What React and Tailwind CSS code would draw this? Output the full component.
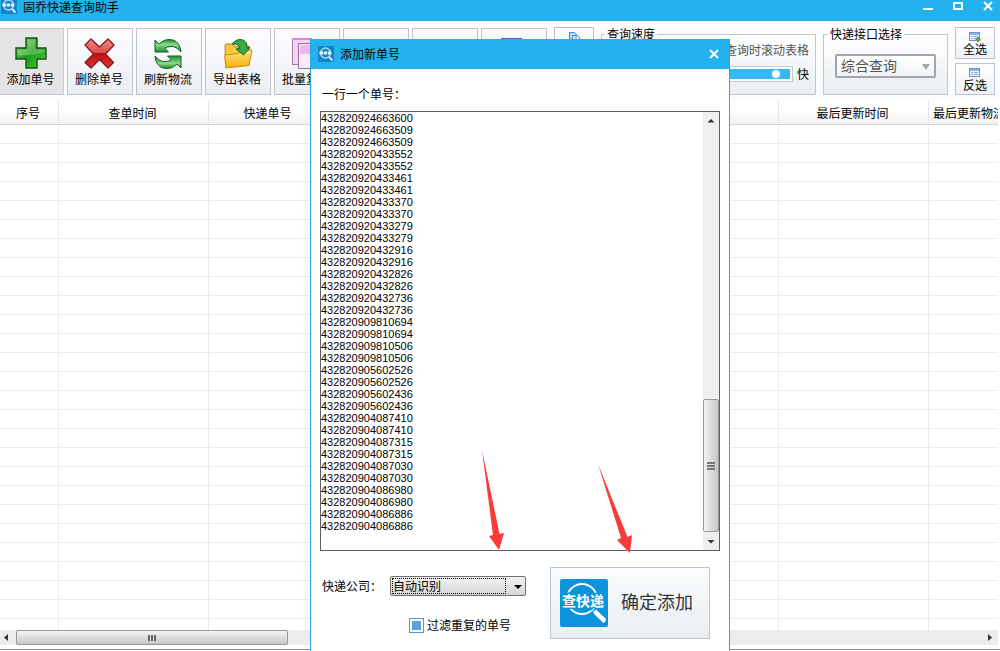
import React from 'react';

const numbers = [
    '432820924663600', '432820924663509', '432820924663509', '432820920433552', '432820920433552',
    '432820920433461', '432820920433461', '432820920433370', '432820920433370', '432820920433279',
    '432820920433279', '432820920432916', '432820920432916', '432820920432826', '432820920432826',
    '432820920432736', '432820920432736', '432820909810694', '432820909810694', '432820909810506',
    '432820909810506', '432820905602526', '432820905602526', '432820905602436', '432820905602436',
    '432820904087410', '432820904087410', '432820904087315', '432820904087315', '432820904087030',
    '432820904087030', '432820904086980', '432820904086980', '432820904086886', '432820904086886',
];

const Logo = ({ className }) => (
    <svg viewBox="0 0 48 48" className={className} aria-hidden="true">
        <rect width="48" height="48" rx="2" fill="#0b93dc" />
        <circle cx="22" cy="20" r="15" fill="none" stroke="#fff" strokeWidth="2" />
        <path d="M33 33l3-2.500 9.500 9q1 3-2 4.500l-9-8.500z" fill="#fff" />
        <text x="23" y="27" textAnchor="middle" fontSize="14" fontWeight="700" fill="#fff" stroke="#0b93dc" strokeWidth="3" paintOrder="stroke">查快递</text>
    </svg>
);

// Reduced mark for the 16px title bar slots
const SmallLogo = () => (
    <svg viewBox="0 0 16 16" className="size-4 shrink-0" aria-hidden="true">
        <rect width="16" height="16" fill="#1285c8" />
        <circle cx="7.500" cy="7" r="5" fill="none" stroke="#a8dcf6" strokeWidth="1.400" />
        <path d="M1.500 7h12" stroke="#e4f5fd" strokeWidth="3" strokeDasharray="3.400 .8" />
        <path d="M11 11l3.500 3.500" stroke="#d5effb" strokeWidth="2" />
    </svg>
);

const AddIcon = () => (
    <svg viewBox="0 0 32 32" className="size-8">
        <defs>
            <linearGradient id="add" x1="0" y1="0" x2="1" y2="1">
                <stop offset="0" stopColor="#7fd866" />
                <stop offset=".5" stopColor="#1f9a1c" />
                <stop offset="1" stopColor="#44d32c" />
            </linearGradient>
        </defs>
        <path d="M11 1h11v10h9v11h-9v9H11v-9H1V11h10z" fill="url(#add)" stroke="#14551a" strokeWidth="1.400" />
        <path d="M12.500 2.500h8v10h9v2q-7 4-27 4v-6h10z" fill="#fff" opacity=".25" />
    </svg>
);

const DeleteIcon = () => (
    <svg viewBox="0 0 32 32" className="size-8">
        <defs>
            <linearGradient id="del" x1="0" y1="0" x2="0" y2="1">
                <stop offset="0" stopColor="#f58c88" />
                <stop offset=".48" stopColor="#dc4a48" />
                <stop offset=".5" stopColor="#b81014" />
                <stop offset="1" stopColor="#e03434" />
            </linearGradient>
        </defs>
        <path d="M8 2l8.500 8L25 2l6 6-8.500 9 8 8.500-5.500 5.500-8.500-8.500L8 31l-6-5.500L10.500 17 2 8z" fill="url(#del)" stroke="#7c181c" strokeWidth="1.200" strokeLinejoin="round" />
    </svg>
);

const RefreshIcon = () => (
    <svg viewBox="0 0 32 32" className="size-8">
        <defs>
            <linearGradient id="ref" x1="0" y1="0" x2="0" y2="1">
                <stop offset="0" stopColor="#1f8a2c" />
                <stop offset=".4" stopColor="#8ad98a" />
                <stop offset="1" stopColor="#1f8f2a" />
            </linearGradient>
        </defs>
        <path d="M3 3l4 4q6-6 14-4 7 2 8 12-5-6-10-5.500-4 0-6 2l3.500 3.500H3z" fill="url(#ref)" stroke="#15602a" />
        <path d="M3 3l4 4q6-6 14-4 7 2 8 12-5-6-10-5.500-4 0-6 2l3.500 3.500H3z" transform="rotate(180 16 17)" fill="url(#ref)" stroke="#15602a" />
    </svg>
);

const ExportIcon = () => (
    <svg viewBox="0 0 32 32" className="size-8">
        <defs>
            <linearGradient id="fold" x1="0" y1="0" x2="0" y2="1">
                <stop offset="0" stopColor="#ffe480" />
                <stop offset="1" stopColor="#f5b010" />
            </linearGradient>
        </defs>
        <path d="M4 9l1-2h7l2 3 14-1v14L5 30z" fill="#f7c93c" stroke="#b97c14" />
        <path d="M3.500 18l14-1.500 3-2.500 10.500-1-3 15.500L5 31z" fill="url(#fold)" stroke="#c98a12" />
        <path d="M11 7q5-6 11-4 4.500 2 4 8l3-.5L22.500 18 15 12l3.500-.5q0-5-7.500-4.500z" fill="#3aac3d" stroke="#17602a" />
    </svg>
);

const CopyIcon = () => (
    <svg viewBox="0 0 32 32" className="size-8">
        <rect x="2.500" y="1.500" width="19" height="26" fill="#f1d5f2" stroke="#a978ad" />
        <path d="M2 2h20" stroke="#da84dc" strokeWidth="2" />
        <rect x="8.500" y="6.500" width="21" height="25" fill="#fbe8fb" stroke="#9a709e" />
        <rect x="10" y="8" width="18" height="9" fill="#edb8ee" />
    </svg>
);

const SheetIcon = () => (
    <svg viewBox="0 0 32 32" className="size-8">
        <rect x="4" y="1" width="21" height="28" fill="#d8dcf6" />
        <path d="M4 1.500h21" stroke="#5c62a8" />
    </svg>
);

const ListIcon = ({ plus }) => (
    <svg viewBox="0 0 12 10" className="h-2.5 w-3">
        <rect x=".5" y=".5" width="10" height="8" fill="#eff6ff" stroke="#6d93cf" />
        <path d="M1 2h9" stroke="#8db1e6" strokeWidth="2" />
        <path d="M2 4.500h2M5 4.500h4M2 6.500h2M5 6.500h4" stroke="#88a9dc" />
        {plus && <path d="M9 5v5M6.500 7.500h5" stroke="#5aa343" strokeWidth="2" />}
    </svg>
);

const DocIcon = () => (
    <svg viewBox="0 0 12 14" className="h-3.5 w-3">
        <path d="M1.500.5h5l2 2v9h-7z" fill="#b9d7fb" stroke="#4d82d6" />
        <path d="M4.500 3.500h5l2 2v8h-7z" fill="#dcebff" stroke="#4d82d6" />
        <path d="M5 8h6M8 4v9" stroke="#6b9ae0" />
    </svg>
);

const CloseIcon = () => (
    <svg viewBox="0 0 10 10" className="size-2.5">
        <path d="M1 1l8 8M9 1L1 9" stroke="#fff" strokeWidth="2" />
    </svg>
);

const ToolButton = ({ icon, label, active }) => (
    <button
        className={
            active
                ? 'flex h-[67px] w-16 shrink-0 flex-col items-center border border-l-0 border-[#c9c4cb] bg-[#e4e3e5] pt-2 pr-0.5'
                : 'flex h-[67px] w-[66px] shrink-0 flex-col items-center border border-[#bfc3ce] bg-linear-to-b from-[#fdfdff] to-[#ebeff2] pt-2 pr-0.5'
        }
    >
        <span className="block size-8">{icon}</span>
        <span className="mt-0.5 leading-4">{label}</span>
    </button>
);

const SmallButton = ({ icon, label }) => (
    <button className="flex h-8 w-10 flex-col items-center border border-[#b9c2d2] bg-linear-to-b from-white to-[#eef2f5] pt-1">
        {icon}
        <span className="leading-[14px]">{label}</span>
    </button>
);

const tools = [
    { label: '添加单号', icon: <AddIcon />, active: true },
    { label: '删除单号', icon: <DeleteIcon /> },
    { label: '刷新物流', icon: <RefreshIcon /> },
    { label: '导出表格', icon: <ExportIcon /> },
    { label: '批量复制', icon: <CopyIcon /> },
    { label: '', icon: null },
    { label: '', icon: null },
    { label: '', icon: <SheetIcon /> },
];

const columns = ['序号', '查单时间', '快递单号', '', '', '', '最后更新时间', '最后更新物流'];
const rows = Array.from({ length: 27 });

const Toolbar = () => (
    <div className="flex h-20 shrink-0 items-end gap-[7px] bg-linear-to-b from-white to-[#fbfcfd] pr-[5px] pb-1.5">
        <div className="flex gap-[3px]">
            {tools.map((tool, idx) => (
                <ToolButton key={idx} {...tool} />
            ))}
        </div>
        <div className="flex shrink-0 flex-col gap-1">
            <SmallButton icon={<DocIcon />} label="" />
            <SmallButton icon={<DocIcon />} label="" />
        </div>
        <fieldset className="h-[69px] min-w-0 flex-1 border border-[#bcc8d4] bg-linear-to-b from-white to-[#e9eef2]">
            <legend className="ml-[3px] px-0.5 leading-4">查询速度</legend>
            <label className="flex items-center justify-end gap-1 pr-1.5 leading-4 text-[#555]">
                <input type="checkbox" className="size-3" />
                查询时滚动表格
            </label>
            <label className="mt-2 flex items-center justify-end gap-1 pr-1.5 leading-4">
                <span className="flex h-4 w-[152px] items-center border border-[#bccbdd] bg-white px-0.5">
                    <input
                        type="range"
                        defaultValue="93"
                        className="h-2.5 w-full appearance-none bg-[#38b8f0] [&::-webkit-slider-thumb]:size-2 [&::-webkit-slider-thumb]:appearance-none [&::-webkit-slider-thumb]:rounded-full [&::-webkit-slider-thumb]:bg-white"
                    />
                </span>
                快
            </label>
        </fieldset>
        <fieldset className="h-[69px] w-[125px] shrink-0 border border-[#bcc8d4] bg-linear-to-b from-white to-[#e9eef2]">
            <legend className="ml-1 px-0.5 leading-4">快递接口选择</legend>
            <div className="relative mx-[11px] mt-3">
                <select aria-label="快递接口选择" className="block h-6 w-full appearance-none rounded-xs border-2 border-[#a3a5a8] bg-linear-to-b from-white to-[#f1f3f5] pb-0.5 pl-1 text-sm leading-[18px] text-[#555]">
                    <option>综合查询</option>
                </select>
                <svg viewBox="0 0 8 6" className="pointer-events-none absolute top-2.5 right-1.5 h-1.5 w-2">
                    <path d="M0 0h8L4 6z" fill="#a5a7a9" />
                </svg>
            </div>
        </fieldset>
        <div className="flex shrink-0 flex-col gap-1">
            <SmallButton icon={<ListIcon plus />} label="全选" />
            <SmallButton icon={<ListIcon />} label="反选" />
        </div>
    </div>
);

const Grid = () => (
    <div className="mr-0.5 min-h-0 flex-1 overflow-hidden">
        <table className="w-[1078px] table-fixed border-separate border-spacing-0">
            <colgroup>
                <col className="w-[59px]" />
                <col className="w-[150px]" />
                <col className="w-[120px]" />
                <col className="w-[150px]" />
                <col className="w-[150px]" />
                <col className="w-[150px]" />
                <col className="w-[150px]" />
                <col className="w-[150px]" />
            </colgroup>
            <thead>
                <tr className="h-6 bg-linear-to-b from-white from-40% to-[#eeeff0]">
                    {columns.map((name, idx) => (
                        <th
                            key={idx}
                            className={`border-r border-b border-r-[#e3e4e6] border-b-[#d3d5d8] p-0 font-normal ${idx === 7 ? 'pl-1 text-left' : 'pr-0.5 text-center'}`}
                        >
                            {name}
                        </th>
                    ))}
                </tr>
            </thead>
            <tbody>
                {rows.map((_, r) => (
                    <tr key={r} className="h-[19px]">
                        {columns.map((_, c) => (
                            <td key={c} className="border-r border-b border-[#ebebeb] p-0" />
                        ))}
                    </tr>
                ))}
            </tbody>
        </table>
    </div>
);

const HorizontalScroll = () => (
    <div className="mr-0.5 flex h-[15px] shrink-0 items-center bg-[#ececec]">
        <svg viewBox="0 0 16 15" className="h-full w-4">
            <path d="M8 4v7L4 7.500z" fill="#333" />
        </svg>
        <div className="flex h-full w-[272px] items-center justify-center gap-px rounded-xs border border-[#989898] bg-linear-to-b from-[#f4f4f4] to-[#c6c6c6]">
            <i className="h-1.5 w-0.5 bg-[#666]" />
            <i className="h-1.5 w-0.5 bg-[#666]" />
            <i className="h-1.5 w-0.5 bg-[#666]" />
        </div>
        <svg viewBox="0 0 16 15" className="ml-auto h-full w-4">
            <path d="M6 4v7l4-3.500z" fill="#333" />
        </svg>
    </div>
);

const AddDialog = () => (
    <div className="absolute top-[39px] bottom-0 left-[310px] flex w-[420px] flex-col border-x border-[#2ba6dc] bg-white">
        <div className="flex h-[30px] shrink-0 items-center bg-[#23b2ee] px-[7px]">
            <SmallLogo />
            <h2 className="ml-1.5 leading-4">添加新单号</h2>
            <button aria-label="关闭" className="ml-auto flex size-4 items-center justify-center">
                <CloseIcon />
            </button>
        </div>
        <div className="flex min-h-0 flex-1 flex-col px-[9px] pt-[17px]">
            <label htmlFor="numbers" className="pl-0.5 leading-4">一行一个单号：</label>
            <div className="relative mt-[9px] flex min-h-0 flex-1 border border-[#5f5f63]">
                <textarea
                    id="numbers"
                    defaultValue={numbers.join('\n')}
                    className="min-w-0 flex-1 resize-none overflow-hidden font-['Liberation_Sans',sans-serif] text-[11px] leading-3 outline-none"
                />
                <div className="flex w-4 flex-col bg-[#efefef]">
                    <svg viewBox="0 0 16 16" className="size-4">
                        <path d="M4.500 10.500h7L8 7z" fill="#333" />
                    </svg>
                    <div className="mt-auto flex h-[133px] flex-col items-center justify-center gap-px rounded-xs border border-[#989898] bg-linear-to-r from-[#f4f4f4] to-[#c6c6c6]">
                        <i className="h-0.5 w-2 bg-[#777]" />
                        <i className="h-0.5 w-2 bg-[#777]" />
                        <i className="h-0.5 w-2 bg-[#777]" />
                    </div>
                    <svg viewBox="0 0 16 16" className="mt-0.5 size-4">
                        <path d="M4.500 6h7L8 9.500z" fill="#333" />
                    </svg>
                </div>
                {/* Pointers towards the company list and the confirm button */}
                <svg viewBox="0 0 28 106" className="pointer-events-none absolute bottom-[-4px] left-[159px] h-[106px] w-7">
                    <path d="M2 2L19.500 86l4.500-1-5 17-10-14 4-1z" fill="#fb3a3a" />
                </svg>
                <svg viewBox="0 0 40 96" className="pointer-events-none absolute bottom-[-8px] left-[275px] h-24 w-10">
                    <path d="M2 2L31.500 75l4.500-2-2 18-13-13 4-2z" fill="#fb3a3a" />
                </svg>
            </div>
        </div>
        <div className="flex h-[100px] shrink-0 justify-between pr-[19px] pl-[11px]">
            <div className="pt-[25px]">
                <div className="flex items-center gap-2">
                    <label htmlFor="company">快递公司：</label>
                    <div className="relative">
                        <select id="company" className="block h-5 w-[136px] appearance-none rounded-xs border border-[#707070] bg-linear-to-b from-[#f3f3f3] to-[#d5d5d5] pl-0.5 leading-4">
                            <option>自动识别</option>
                        </select>
                        <span className="pointer-events-none absolute inset-y-0.5 right-5 left-0.5 border border-dotted border-black" />
                        <svg viewBox="0 0 8 4" className="pointer-events-none absolute top-[9px] right-1 h-1 w-2">
                            <path d="M0 0h8L4 4z" fill="#000" />
                        </svg>
                    </div>
                </div>
                <label className="mt-[21px] ml-[87px] flex items-center gap-[3px] leading-4">
                    <input
                        type="checkbox"
                        defaultChecked
                        className="size-[15px] appearance-none border border-[#4f97d0] bg-white bg-clip-content p-0.5 checked:bg-[#5aa2e0]"
                    />
                    过滤重复的单号
                </label>
            </div>
            <button className="mt-4 flex h-[72px] w-40 items-center gap-[13px] border border-[#bcc6d2] bg-linear-to-b from-[#fafcfd] to-[#e9eef1] pl-[9px] text-lg text-[#333]">
                <Logo className="size-12" />
                <span className="pb-1">确定添加</span>
            </button>
        </div>
    </div>
);

export default function App() {
    return (
        <div className="relative flex h-screen flex-col overflow-hidden bg-white font-['Noto_Sans_CJK_SC',sans-serif] text-xs text-black">
            <header className="flex h-[21px] shrink-0 items-start bg-[#23b2ee] pr-[7px] pl-px">
                <div className="flex h-3.5 items-end overflow-hidden">
                    <SmallLogo />
                </div>
                <h1 className="ml-1.5 leading-[14px]">固乔快递查询助手</h1>
                <div className="ml-auto flex gap-5 pt-px">
                    <button aria-label="最小化">
                        <svg viewBox="0 0 10 10" className="size-2.5">
                            <path d="M0 8h10" stroke="#fff" strokeWidth="2" />
                        </svg>
                    </button>
                    <button aria-label="最大化">
                        <svg viewBox="0 0 10 10" className="size-2.5">
                            <path d="M1 2h8v6H1z" fill="none" stroke="#fff" strokeWidth="2" />
                        </svg>
                    </button>
                    <button aria-label="关闭窗口">
                        <CloseIcon />
                    </button>
                </div>
            </header>
            <Toolbar />
            <Grid />
            <HorizontalScroll />
            <div className="mt-1 mb-px h-px shrink-0 bg-[#8e8e90]" />
            <AddDialog />
        </div>
    );
}
